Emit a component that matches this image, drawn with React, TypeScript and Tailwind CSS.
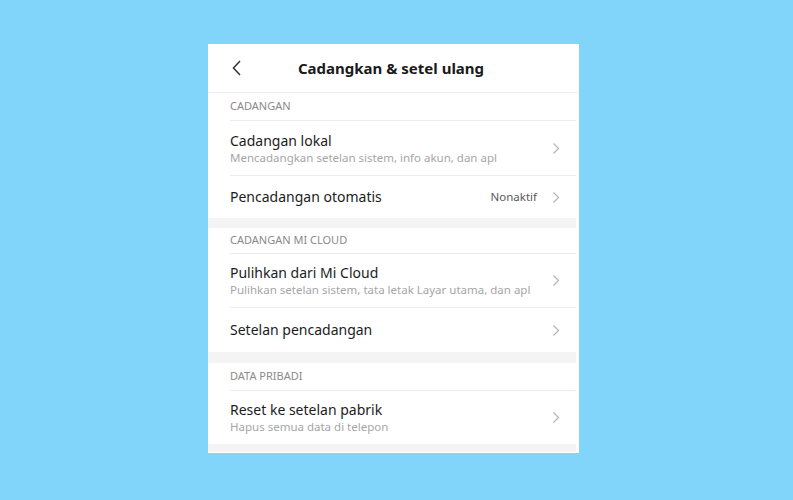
const font = { fontFamily: '"Noto Sans", "Open Sans", sans-serif' }

function Chevron() {
  return (
    <svg width="8" height="13" viewBox="0 0 8 13" className="shrink-0">
      <path d="M1.5 1.5 L6.5 6.5 L1.5 11.5" fill="none" stroke="#b5b5b5" strokeWidth="1.2" />
    </svg>
  )
}

function Label({ text, h }: { text: string; h: string }) {
  return (
    <div className="pl-[22px] pr-[3px]">
      <div className={`${h} flex items-center border-b border-[#ececec]`}>
        <span className="text-[11px] text-[#8a8a8a]">{text}</span>
      </div>
    </div>
  )
}

function Row({
  title,
  sub,
  value,
  h,
  divider,
}: {
  title: string
  sub?: string
  value?: string
  h: string
  divider?: boolean
}) {
  return (
    <div className="pl-[22px] pr-[3px]">
      <div className={`${h} flex items-center pr-[16px] ${divider ? 'border-b border-[#ececec]' : ''}`}>
        <div className="flex-1 flex flex-col">
          <span className="text-[14px] leading-[18px] text-[#1c1c1c]">{title}</span>
          {sub && <span className="text-[11.5px] leading-[15px] text-[#a6a6a6]">{sub}</span>}
        </div>
        {value && <span className="text-[11.5px] text-[#5a5a5a] mr-[15px]">{value}</span>}
        <Chevron />
      </div>
    </div>
  )
}

function Band({ h }: { h: string }) {
  return (
    <div className="pr-[3px]">
      <div className={`${h} bg-[#f4f4f4]`} />
    </div>
  )
}

export default function App() {
  return (
    <div className="w-[793px] h-[500px] bg-[#81d4fa] pt-[44px] pl-[208px]" style={font}>
      <div className="w-[371px] h-[409px] bg-white flex flex-col overflow-hidden">
        <div className="h-[49px] flex items-center pl-[24px] pr-[3px] border-b border-[#f0f0f0]">
          <svg width="10" height="16" viewBox="0 0 10 16">
            <path d="M8 1 L1.5 8 L8 15" fill="none" stroke="#333" strokeWidth="1.5" />
          </svg>
          <span className="flex-1 text-center text-[15px] font-bold text-[#1a1a1a] pr-[36px]">
            Cadangkan &amp; setel ulang
          </span>
        </div>

        <Label text="CADANGAN" h="h-[28px]" />
        <Row title="Cadangan lokal" sub="Mencadangkan setelan sistem, info akun, dan apl" h="h-[55px]" divider />
        <Row title="Pencadangan otomatis" value="Nonaktif" h="h-[42px]" />
        <Band h="h-[10px]" />

        <Label text="CADANGAN MI CLOUD" h="h-[26px]" />
        <Row title="Pulihkan dari Mi Cloud" sub="Pulihkan setelan sistem, tata letak Layar utama, dan apl" h="h-[54px]" divider />
        <Row title="Setelan pencadangan" h="h-[44px]" />
        <Band h="h-[11px]" />

        <Label text="DATA PRIBADI" h="h-[28px]" />
        <Row title="Reset ke setelan pabrik" sub="Hapus semua data di telepon" h="h-[53px]" />
        <Band h="h-[8px]" />
      </div>
    </div>
  )
}
